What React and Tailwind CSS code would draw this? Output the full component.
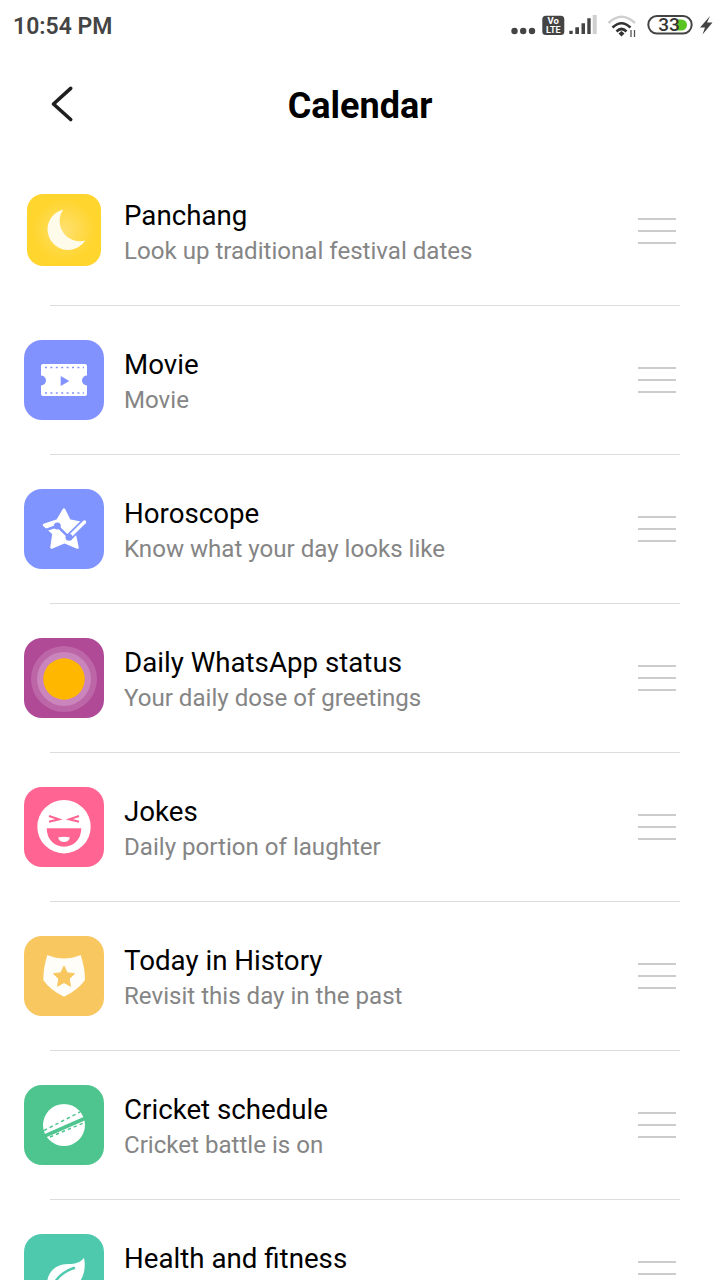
const Moon = () => (
  <div className="w-[74px] h-[72px] mb-[2px] rounded-[16px] bg-[radial-gradient(circle,#ffe070_0%,#ffd52e_60%)]">
    <svg width="74" height="72" viewBox="0 0 74 72">
      <path d="M36.3 15.5A20.5 20.5 0 1 0 58.3 46.5A20.2 20.2 0 0 1 36.3 15.5Z" fill="#fffbea" />
    </svg>
  </div>
);

const IconBox = ({ bg, children }) => (
  <div className={`w-20 h-20 rounded-[18px] overflow-hidden ${bg}`}>
    <svg width="80" height="80" viewBox="0 0 80 80">{children}</svg>
  </div>
);

const Movie = () => (
  <IconBox bg="bg-[#8192ff]">
    <path d="M19 24H61a2 2 0 0 1 2 2V35.5a5 5 0 0 0 0 10V54a2 2 0 0 1-2 2H19a2 2 0 0 1-2-2V45.5a5 5 0 0 0 0-10V26a2 2 0 0 1 2-2Z" fill="#fff" />
    <path d="M21 27.5H60M21 53H60" stroke="#8192ff" strokeWidth="1.4" strokeDasharray="2 3.4" />
    <path d="M36.7 36L45.3 41L36.7 46Z" fill="#8192ff" />
  </IconBox>
);

const Horoscope = () => (
  <IconBox bg="bg-[#8094ff]">
    <path d="M40 20.5L45.5 31.5L60 34.5L50.5 44.5L53.5 58.5L40.5 53L27.5 58.5L29.5 44.5L20 36L33.5 31.5Z" fill="#fff" stroke="#fff" strokeWidth="2.5" strokeLinejoin="round" />
    <path d="M19 42L33.3 37L45 48.3" fill="none" stroke="#8094ff" strokeWidth="2.5" />
    <path d="M45 48.3L61 32.7" stroke="#8094ff" strokeWidth="7" />
    <path d="M46 47.3L60.5 33" stroke="#fff" strokeWidth="3.4" strokeLinecap="round" />
    <circle cx="33.3" cy="37" r="3.5" fill="#8094ff" />
    <circle cx="45" cy="48.3" r="3.5" fill="#8094ff" />
  </IconBox>
);

const Sun = () => (
  <IconBox bg="bg-[#b04a96]">
    <circle cx="40" cy="41" r="33" fill="#bc66a8" />
    <circle cx="40" cy="41" r="27" fill="#c985bc" />
    <circle cx="40" cy="41" r="20.7" fill="#ffb700" />
  </IconBox>
);

const Joke = () => (
  <IconBox bg="bg-[#ff6492]">
    <circle cx="40" cy="39.7" r="26.7" fill="#fff" />
    <path d="M25 29L35 32.3L25 34.7M55 29L45.3 32.3L55 34.7" fill="none" stroke="#ff6492" strokeWidth="2" />
    <path d="M22.7 41.3H57.3C57.3 52 50 59.7 40 59.7C30 59.7 22.7 52 22.7 41.3Z" fill="#ff6492" />
    <path d="M34 50.5Q40 49 46 50.5Q44.5 55 40 55Q35.5 55 34 50.5Z" fill="#fff" />
  </IconBox>
);

const Shield = () => (
  <IconBox bg="bg-[#f9c75f]">
    <path d="M23.3 19Q32 22.5 40 22.5Q48 22.5 56.7 19Q61 32 61 44Q54 54 40 60.7Q26 54 19.3 44Q19.3 32 23.3 19Z" fill="#fffdf8" />
    <path d="M40 30L43.2 36.8L50.5 37.7L45.2 42.8L46.5 50.2L40 46.6L33.5 50.2L34.8 42.8L29.5 37.7L36.8 36.8Z" fill="#f9c75f" stroke="#f9c75f" strokeWidth="1" strokeLinejoin="round" />
  </IconBox>
);

const Cricket = () => (
  <IconBox bg="bg-[#4ec58e]">
    <circle cx="40" cy="40" r="21" fill="#fff" />
    <path d="M17 52.7L63 32.5" stroke="#4ec58e" strokeWidth="3.6" />
    <path d="M20 45.5L56 27" stroke="#4ec58e" strokeWidth="1.5" strokeDasharray="3.4 3" />
    <path d="M26 52L59.5 38" stroke="#4ec58e" strokeWidth="1.5" strokeDasharray="3.4 3" />
  </IconBox>
);

const Leaf = () => (
  <IconBox bg="bg-[#4fc9ae]">
    <path d="M60 23.7C63 38 57 50 46 57L24 57C20 42 29 30 44 30C52 30 57 28 60 23.7Z" fill="#fff" />
    <path d="M30 50C34 42 41 37 50 34" fill="none" stroke="#4fc9ae" strokeWidth="2.4" strokeLinecap="round" />
  </IconBox>
);

const rows = [
  { title: "Panchang", sub: "Look up traditional festival dates", Icon: Moon },
  { title: "Movie", sub: "Movie", Icon: Movie },
  { title: "Horoscope", sub: "Know what your day looks like", Icon: Horoscope },
  { title: "Daily WhatsApp status", sub: "Your daily dose of greetings", Icon: Sun },
  { title: "Jokes", sub: "Daily portion of laughter", Icon: Joke },
  { title: "Today in History", sub: "Revisit this day in the past", Icon: Shield },
  { title: "Cricket schedule", sub: "Cricket battle is on", Icon: Cricket },
  { title: "Health and fitness", sub: "\u00a0", Icon: Leaf },
];

const StatusIcons = () => (
  <svg width="205" height="52" viewBox="510 0 205 52">
    <circle cx="514.5" cy="31" r="3.2" fill="#444" />
    <circle cx="523.2" cy="31" r="3.2" fill="#444" />
    <circle cx="532" cy="31" r="3.2" fill="#444" />
    <rect x="542.3" y="15.7" width="22" height="19.3" rx="3.5" fill="#444" />
    <text x="553.3" y="24.4" textAnchor="middle" fontSize="9.5" fontWeight="700" fontFamily="Roboto" fill="#fff">Vo</text>
    <text x="553.3" y="33" textAnchor="middle" fontSize="9" fontWeight="700" fontFamily="Roboto" fill="#fff">LTE</text>
    <path d="M569.3 34V30.7H572.7V34ZM575.3 34V27.3H579V34ZM581.5 34V23.3H585V34ZM587.3 34V18.3H590.7V34Z" fill="#444" />
    <path d="M592.7 34V15H596.7V34Z" fill="#cfcfcf" />
    <path d="M608.5 23Q621.5 10.5 635 23" fill="none" stroke="#cfcfcf" strokeWidth="2.6" />
    <path d="M612.5 27.5Q621.5 19 630.5 27.5" fill="none" stroke="#333" strokeWidth="2.6" />
    <path d="M616.5 31.5Q621.5 26.5 626.5 31.5" fill="none" stroke="#333" strokeWidth="2.6" />
    <path d="M618.5 33.5L621.5 31L624.5 33.5L621.5 36.5Z" fill="#333" />
    <path d="M631 30V37M634.5 30V37" stroke="#555" strokeWidth="1.3" />
    <rect x="648.3" y="16" width="43.4" height="17.5" rx="8.7" fill="#fff" stroke="#444" strokeWidth="2" />
    <path d="M677 19.5H681.5A5.5 5.5 0 0 1 681.5 30.5H677Z" fill="#5ac423" />
    <text x="669" y="31" textAnchor="middle" fontSize="19" fontWeight="500" fontFamily="Roboto" fill="#333">33</text>
    <path d="M710 16L700 27.5H705L702.5 34.5L712.5 22.5H707Z" fill="#444" />
  </svg>
);

export default function App() {
  return (
    <div className="w-[720px] h-[1280px] overflow-hidden bg-white font-['Roboto',sans-serif]">
      <div className="h-[52px] flex justify-between items-start">
        <span className="ml-[13px] mt-[11px] text-[23px] leading-[32px] font-semibold text-[#444]">10:54 PM</span>
        <div className="mr-[5px]"><StatusIcons /></div>
      </div>
      <div className="h-[105px] grid grid-cols-[1fr_auto_1fr] items-center">
        <div className="pl-[50px] h-[40px] mb-[2px]">
          <svg width="26" height="40" viewBox="0 0 26 40">
            <path d="M20.7 4.3L3.5 20L20.7 35.5" fill="none" stroke="#1f1f1f" strokeWidth="3.6" strokeLinecap="round" strokeLinejoin="round" />
          </svg>
        </div>
        <h1 className="text-[36px] leading-[44px] pt-[2px] font-bold text-black">Calendar</h1>
        <div />
      </div>
      {rows.map(({ title, sub, Icon }) => (
        <div key={title}>
          <div className="h-[148px] flex items-center pl-6 pr-[44px]">
            <div className="w-20 h-20 flex items-center justify-center shrink-0"><Icon /></div>
            <div className="ml-5 flex-1 pt-[4px]">
              <div className="text-[27.7px] leading-[36px] text-black">{title}</div>
              <div className="text-[24.1px] leading-[34px] text-[#858585]">{sub}</div>
            </div>
            <div className="w-[38px] flex flex-col gap-[10px]">
              <div className="h-[2px] bg-[#cccccc]" />
              <div className="h-[2px] bg-[#cccccc]" />
              <div className="h-[2px] bg-[#cccccc]" />
            </div>
          </div>
          <div className="h-px ml-[50px] mr-[40px] bg-[#dcdcdc]" />
        </div>
      ))}
    </div>
  );
}
